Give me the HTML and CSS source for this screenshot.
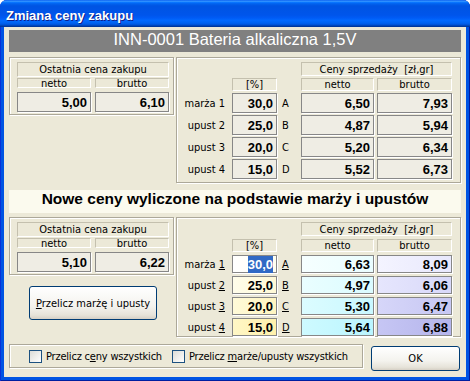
FILE: index.html
```html
<!DOCTYPE html>
<html lang="pl">
<head>
    <meta charset="UTF-8">
    <title>Zmiana ceny zakupu</title>
    <link rel="stylesheet" href="styles.css">
</head>
<body>
    <div class="window">
        <div class="titlebar">Zmiana ceny zakupu</div>

        <div class="client">
            <div class="product">INN-0001 Bateria alkaliczna 1,5V</div>

            <!-- current prices -->
            <div class="half">
                <div class="side">
                    <div class="panel last-price">
                        <div class="cap wide">Ostatnia cena zakupu</div>
                        <div class="cap">netto</div>
                        <div class="cap">brutto</div>
                        <div class="val">5,00</div>
                        <div class="val">6,10</div>
                    </div>
                </div>

                <div class="panel prices">
                    <span></span><span></span><span></span>
                    <div class="cap wide">Ceny sprzedaży&nbsp; [zł,gr]</div>
                    <span></span><div class="cap">[%]</div><span></span><div class="cap">netto</div><div class="cap b">brutto</div>

                    <div class="lbl">marża 1</div><div class="val">30,0</div><div class="letter">A</div><div class="val">6,50</div><div class="val b">7,93</div>
                    <div class="lbl">upust 2</div><div class="val">25,0</div><div class="letter">B</div><div class="val">4,87</div><div class="val b">5,94</div>
                    <div class="lbl">upust 3</div><div class="val">20,0</div><div class="letter">C</div><div class="val">5,20</div><div class="val b">6,34</div>
                    <div class="lbl">upust 4</div><div class="val">15,0</div><div class="letter">D</div><div class="val">5,52</div><div class="val b">6,73</div>
                </div>
            </div>

            <div class="heading">Nowe ceny wyliczone na podstawie marży i upustów</div>

            <!-- new prices -->
            <div class="half">
                <div class="side">
                    <div class="panel last-price">
                        <div class="cap wide">Ostatnia cena zakupu</div>
                        <div class="cap">netto</div>
                        <div class="cap">brutto</div>
                        <div class="val">5,10</div>
                        <div class="val">6,22</div>
                    </div>
                    <button class="btn recalc"><u>P</u>rzelicz marżę i upusty</button>
                </div>

                <div class="panel prices new">
                    <span></span><span></span><span></span>
                    <div class="cap wide">Ceny sprzedaży&nbsp; [zł,gr]</div>
                    <span></span><div class="cap">[%]</div><span></span><div class="cap">netto</div><div class="cap b">brutto</div>

                    <div class="lbl">marża <u>1</u></div><div class="val pct r1"><span class="sel">30,0</span></div><div class="letter"><u>A</u></div><div class="val net r1">6,63</div><div class="val b gross r1">8,09</div>
                    <div class="lbl">upust <u>2</u></div><div class="val pct r2">25,0</div><div class="letter"><u>B</u></div><div class="val net r2">4,97</div><div class="val b gross r2">6,06</div>
                    <div class="lbl">upust <u>3</u></div><div class="val pct r3">20,0</div><div class="letter"><u>C</u></div><div class="val net r3">5,30</div><div class="val b gross r3">6,47</div>
                    <div class="lbl">upust <u>4</u></div><div class="val pct r4">15,0</div><div class="letter"><u>D</u></div><div class="val net r4">5,64</div><div class="val b gross r4">6,88</div>
                </div>
            </div>

            <div class="footer">
                <div class="panel options">
                    <label class="check"><span class="box"></span><span>Przelicz c<u>e</u>ny wszystkich</span></label>
                    <label class="check"><span class="box"></span><span>Przelicz <u>m</u>arże/upusty wszystkich</span></label>
                </div>
                <button class="btn ok">OK</button>
            </div>
        </div>
    </div>
</body>
</html>
```

FILE: styles.css
```css
* {
    box-sizing: border-box;
}

body {
    margin: 0;
    background: #fff;
    font-family: "Liberation Sans", Arial, sans-serif;
}

.window {
    width: 470px;
    height: 381px;
    display: flex;
    flex-direction: column;
    background: #0054e3;
    border-radius: 7px 7px 0 0;
    box-shadow: inset 1px 0 #0831d9, inset -1px 0 #001ea0, inset 0 -1px #001ea0;
    overflow: hidden;
}

.titlebar {
    flex: none;
    height: 27px;
    padding: 4px 6px 0;
    display: flex;
    align-items: center;
    color: #fff;
    font: bold 13px "Liberation Sans", Arial, sans-serif;
    text-shadow: 1px 1px #0f1f8a;
    background: linear-gradient(to bottom, #0058ee 0%, #3a93ff 4%, #288eff 6%, #127dff 8%, #036ffc 10%, #0262ee 14%, #0057e5 20%, #0054e3 24%, #0055eb 56%, #005bf5 66%, #026afe 76%, #0062ef 86%, #0052d6 92%, #0040ab 96%, #003092 100%);
}

.client {
    flex: 1;
    margin: 0 4px 4px;
    padding: 3px 5px 0;
    display: flex;
    flex-direction: column;
    background: #ece9d8;
    font: 11px "DejaVu Sans Condensed", "Liberation Sans", sans-serif;
    color: #000;
    white-space: nowrap;
}

.product {
    height: 22px;
    line-height: 22px;
    background: #808080;
    color: #fff;
    text-align: center;
    font: 16.5px "Liberation Sans", Arial, sans-serif;
}

.half {
    display: flex;
    align-items: flex-start;
    gap: 2px;
    margin-top: 5px;
}

.heading {
    margin-top: 7px;
    height: 23px;
    line-height: 23px;
    background: #fbfaee;
    text-align: center;
    font: bold 15.5px "Liberation Sans", Arial, sans-serif;
}

.heading + .half {
    margin-top: 4px;
}

.side {
    width: 165px;
    flex: none;
    display: flex;
    flex-direction: column;
}

.panel {
    border: 1px solid #aca899;
    box-shadow: inset 1px 1px #fff, 1px 1px #fff;
}

/* small grey boxes */

.cap {
    display: flex;
    align-items: center;
    justify-content: center;
    border: 1px solid;
    border-color: #c4c0ae #fff #fff #c4c0ae;
}

.wide {
    grid-column: span 2;
}

.val {
    display: flex;
    align-items: center;
    justify-content: flex-end;
    padding-right: 3px;
    background: #efede4;
    border: 1px solid #878787;
    box-shadow: 1px 1px #fff;
    font: bold 13px "Liberation Sans", Arial, sans-serif;
}

.last-price {
    display: grid;
    grid-template-columns: 74px 74px;
    grid-template-rows: 16px 14px 20px;
    column-gap: 4px;
    padding: 4px 0 2px 7px;
}

.last-price .wide {
    margin-bottom: 1px;
}

.last-price .cap:not(.wide) {
    margin-bottom: 4px;
}

.prices {
    flex: 1;
    display: grid;
    grid-template-columns: 54px 45px 24px 73px 78px;
    grid-template-rows: 14px 13px repeat(4, 20px);
    row-gap: 2px;
    padding: 4px 0 3px 1px;
}

.prices .wide {
    grid-column: 4 / span 2;
}

.prices .b {
    margin-left: 3px;
}

.prices .lbl {
    text-align: right;
    padding-right: 7px;
    align-self: center;
}

.prices .letter {
    padding-left: 5px;
    align-self: center;
}

.prices.new {
    grid-template-rows: 14px 13px repeat(4, 18px);
    row-gap: 3px;
    padding-bottom: 0;
}

/* coloured fields of the new prices */

.pct.r1 { background: linear-gradient(to right, #ffffff, #fffff0); }
.pct.r2 { background: linear-gradient(to right, #fffdea, #fff9d6); }
.pct.r3 { background: linear-gradient(to right, #fffad8, #fff5c0); }
.pct.r4 { background: linear-gradient(to right, #fff7c6, #fff1ab); }

.net.r1 { background: linear-gradient(to right, #f6ffff, #eafdff); }
.net.r2 { background: linear-gradient(to right, #eafeff, #dafbff); }
.net.r3 { background: linear-gradient(to right, #dcfcff, #c9f8ff); }
.net.r4 { background: linear-gradient(to right, #cefaff, #baf5ff); }

.gross.r1 { background: linear-gradient(to right, #f4f4ff, #e8e8fd); }
.gross.r2 { background: linear-gradient(to right, #e6e6fd, #d8d8f9); }
.gross.r3 { background: linear-gradient(to right, #d6d6f9, #c7c7f3); }
.gross.r4 { background: linear-gradient(to right, #c6c6f4, #b5b5ec); }

.sel {
    background: #316ac5;
    color: #fff;
    padding: 1px 0;
}

/* buttons */

.btn {
    font: 11px "DejaVu Sans Condensed", "Liberation Sans", sans-serif;
    color: #000;
    border: 1px solid #003c74;
    border-radius: 3px;
    background: linear-gradient(to bottom, #ffffff, #f4f3ee 60%, #e6e3d9 88%, #d6d0c5);
    padding: 0;
    white-space: nowrap;
}

.recalc {
    margin: 11px 0 0 20px;
    width: 128px;
    height: 34px;
}

.footer {
    display: flex;
    align-items: flex-start;
    margin-top: 7px;
}

.options {
    width: 354px;
    height: 24px;
    display: flex;
    align-items: center;
    gap: 10px;
    padding-left: 19px;
    letter-spacing: -0.2px;
}

.check {
    display: flex;
    align-items: center;
    gap: 4px;
}

.box {
    width: 13px;
    height: 13px;
    border: 1px solid #1c5180;
    background: linear-gradient(135deg, #dcdcd7, #ffffff);
}

.ok {
    margin: 2px 0 0 8px;
    width: 89px;
    height: 25px;
}
```
